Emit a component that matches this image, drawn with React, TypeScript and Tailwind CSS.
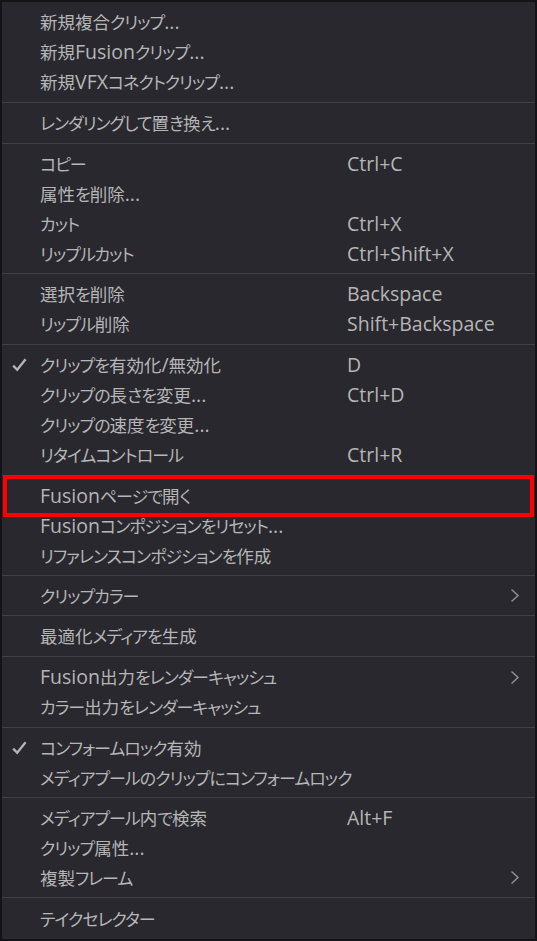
import React from "react";

type Item = {
  label: string;
  shortcut?: string;
  check?: boolean;
  sub?: boolean;
  marked?: boolean;
};

type Group = { h: string; items: Item[] };

const groups: Group[] = [
  {
    h: "h-[100px]",
    items: [
      { label: "新規複合クリップ..." },
      { label: "新規Fusionクリップ..." },
      { label: "新規VFXコネクトクリップ..." },
    ],
  },
  { h: "h-[40px]", items: [{ label: "レンダリングして置き換え..." }] },
  {
    h: "h-[129px]",
    items: [
      { label: "コピー", shortcut: "Ctrl+C" },
      { label: "属性を削除..." },
      { label: "カット", shortcut: "Ctrl+X" },
      { label: "リップルカット", shortcut: "Ctrl+Shift+X" },
    ],
  },
  {
    h: "h-[70px]",
    items: [
      { label: "選択を削除", shortcut: "Backspace" },
      { label: "リップル削除", shortcut: "Shift+Backspace" },
    ],
  },
  {
    h: "h-[130px]",
    items: [
      { label: "クリップを有効化/無効化", shortcut: "D", check: true },
      { label: "クリップの長さを変更...", shortcut: "Ctrl+D" },
      { label: "クリップの速度を変更..." },
      { label: "リタイムコントロール", shortcut: "Ctrl+R" },
    ],
  },
  {
    h: "h-[99px]",
    items: [
      { label: "Fusionページで開く", marked: true },
      { label: "Fusionコンポジションをリセット..." },
      { label: "リファレンスコンポジションを作成" },
    ],
  },
  { h: "h-[39px]", items: [{ label: "クリップカラー", sub: true }] },
  { h: "h-[40px]", items: [{ label: "最適化メディアを生成" }] },
  {
    h: "h-[70px]",
    items: [
      { label: "Fusion出力をレンダーキャッシュ", sub: true },
      { label: "カラー出力をレンダーキャッシュ" },
    ],
  },
  {
    h: "h-[69px]",
    items: [
      { label: "コンフォームロック有効", check: true },
      { label: "メディアプールのクリップにコンフォームロック" },
    ],
  },
  {
    h: "h-[99px]",
    items: [
      { label: "メディアプール内で検索", shortcut: "Alt+F" },
      { label: "クリップ属性..." },
      { label: "複製フレーム", sub: true },
    ],
  },
  { h: "h-[41px]", items: [{ label: "テイクセレクター" }] },
];

const SPLIT = /([\u3040-\u30ff\uff00-\uffef]+|[\u4e00-\u9fff]+)/;
const KANA = /^[\u3040-\u30ff\uff00-\uffef]+$/;

function Label({ text }: { text: string }) {
  const parts = text.split(SPLIT).filter((p) => p.length > 0);
  return (
    <span className="whitespace-nowrap">
      {parts.map((p, i) => {
        if (KANA.test(p)) {
          return (
            <span
              key={i}
              className="font-['Noto_Sans_CJK_JP',sans-serif] text-[17px] tracking-[-1px] [font-feature-settings:'palt']"
            >
              {p}
            </span>
          );
        }
        if (/^[\u4e00-\u9fff]+$/.test(p)) {
          return (
            <span
              key={i}
              className="font-['Noto_Sans_CJK_JP',sans-serif] text-[17.5px]"
            >
              {p}
            </span>
          );
        }
        return <span key={i}>{p}</span>;
      })}
    </span>
  );
}

function Check() {
  return (
    <svg width="15" height="14" viewBox="0 0 15 14" className="block">
      <path
        d="M1.2 7.6 L5.2 11.8 L13.6 1.2"
        fill="none"
        stroke="#b4b4b4"
        strokeWidth="2.3"
        strokeLinecap="butt"
        strokeLinejoin="miter"
      />
    </svg>
  );
}

function Chevron() {
  return (
    <svg width="10" height="15" viewBox="0 0 10 15" className="block">
      <path
        d="M1.5 1.5 L8 7.5 L1.5 13.5"
        fill="none"
        stroke="#8c8c8e"
        strokeWidth="1.6"
      />
    </svg>
  );
}

function Row({ item }: { item: Item }) {
  return (
    <div className="relative flex h-[30px] items-center leading-none">
      <div className="flex w-[38px] shrink-0 items-center pl-[10px]">
        {item.check ? <Check /> : null}
      </div>
      <div className="w-[307px] shrink-0">
        <Label text={item.label} />
      </div>
      <div className="flex-1 whitespace-nowrap">{item.shortcut ?? ""}</div>
      <div className="flex w-[28px] shrink-0 items-center justify-start pl-[3px]">
        {item.sub ? <Chevron /> : null}
      </div>
      {item.marked ? (
        <div className="pointer-events-none absolute left-[1px] right-[1px] top-[-6px] h-[42px] border-[4px] border-[#ff0000]" />
      ) : null}
    </div>
  );
}

export default function App() {
  return (
    <div className="h-[941px] w-[537px] border-2 border-[#141416] bg-[#28282e] font-['Open_Sans','Noto_Sans_CJK_JP',sans-serif] text-[19.5px] text-[#b6b6b6]">
      <div className="flex flex-col">
        {groups.map((g, gi) => (
          <React.Fragment key={gi}>
            {gi > 0 ? <div className="h-px w-full bg-[#404046]" /> : null}
            <div className={`flex flex-col justify-center ${g.h}`}>
              {g.items.map((it, ii) => (
                <Row key={ii} item={it} />
              ))}
            </div>
          </React.Fragment>
        ))}
      </div>
    </div>
  );
}
